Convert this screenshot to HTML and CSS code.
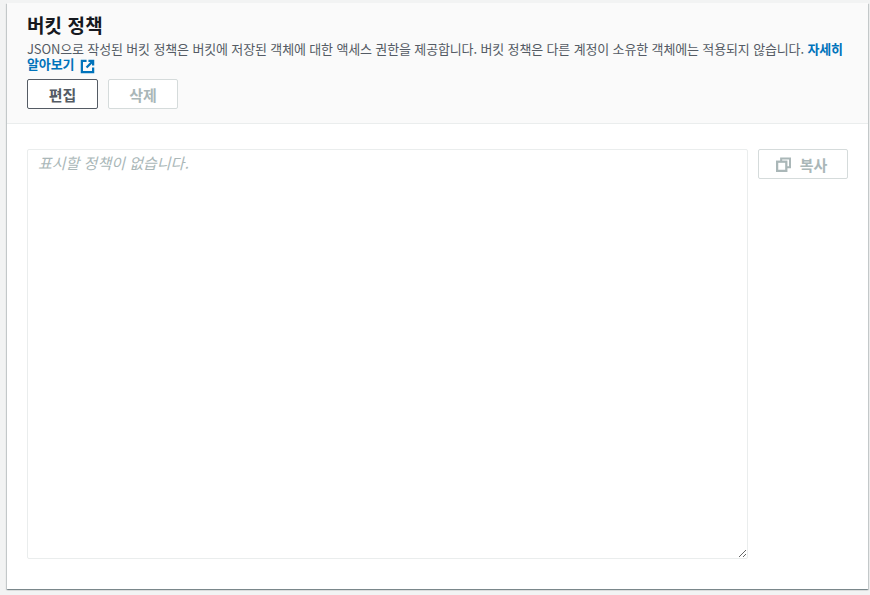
FILE: index.html
```html
<!DOCTYPE html>
<html lang="ko">
<head>
<meta charset="utf-8">
<title>버킷 정책</title>
<link rel="stylesheet" href="styles.css">
</head>
<body>
<section class="card">
  <header class="card-header">
    <h2 class="title">버킷 정책</h2>
    <p class="desc">JSON으로 작성된 버킷 정책은 버킷에 저장된 객체에 대한 액세스 권한을 제공합니다. 버킷 정책은 다른 계정이 소유한 객체에는 적용되지 않습니다. <a class="link" href="#">자세히 알아보기<svg class="ext" viewBox="0 0 16 16" width="16" height="16" aria-hidden="true"><path d="M7 2H2v12h12V9" fill="none" stroke="currentColor" stroke-width="2.4"/><path d="M9 2h5v5" fill="none" stroke="currentColor" stroke-width="2.4"/><path d="M14 2L7 9" fill="none" stroke="currentColor" stroke-width="2.4"/></svg></a></p>
    <div class="actions">
      <button class="btn btn-edit" type="button">편집</button>
      <button class="btn btn-off" type="button" disabled>삭제</button>
    </div>
  </header>
  <div class="card-body">
    <textarea class="policy" placeholder="표시할 정책이 없습니다." readonly></textarea>
    <button class="btn btn-off btn-copy" type="button" disabled><svg class="copy" viewBox="0 0 16 16" width="16" height="16" aria-hidden="true"><path d="M5.5 5V1.5h9.5V11H11" fill="none" stroke="currentColor" stroke-width="2.2"/><rect x="1.2" y="5" width="9.8" height="9.8" fill="none" stroke="currentColor" stroke-width="2.4"/></svg>복사</button>
  </div>
</section>
</body>
</html>
```
FILE: styles.css
```css
* { box-sizing: border-box; }
html, body { height: 100%; }
body {
  margin: 0;
  padding: 3px 2px 6px 7px;
  background: #f2f3f3;
  font-family: "Noto Sans CJK KR", "Noto Sans", sans-serif;
  color: #16191f;
}
.card {
  height: 586px;
  background: #fff;
  box-shadow: 0 1px 1px 0 rgba(0,28,36,.3), 1px 1px 1px 0 rgba(0,28,36,.15), -1px 1px 1px 0 rgba(0,28,36,.15);
  display: flex;
  flex-direction: column;
}
.card-header {
  height: 121px;
  padding: 10px 20px 0;
  background: #fafafa;
  border-bottom: 1px solid #eaeded;
}
.title {
  margin: 0;
  font-size: 19px;
  line-height: 24px;
  font-weight: 700;
  letter-spacing: .1px;
}
.desc {
  height: 31px;
  margin: 4px 0 0;
  font-size: 13px;
  line-height: 15px;
  letter-spacing: -.14px;
  color: #545b64;
}
.link { color: #0073bb; font-weight: 700; text-decoration: none; }
.ext { width: 15px; height: 15px; margin-left: 6px; vertical-align: -5px; }
.actions { display: flex; gap: 10px; margin-top: 7px; }
.btn {
  height: 30px;
  font-family: inherit;
  font-size: 15px;
  font-weight: 700;
  border-radius: 2px;
  background: #fff;
  padding: 0;
}
.btn-edit { width: 71px; border: 1px solid #545b64; color: #545b64; }
.btn-off { width: 70px; border: 1px solid #d5dbdb; color: #aab7b8; }
.card-body {
  flex: 1;
  display: flex;
  align-items: flex-start;
  gap: 10px;
  padding: 25px 20px 0;
}
.policy {
  width: 721px;
  height: 410px;
  padding: 3px 10px;
  border: 1px solid #eaeded;
  border-radius: 2px;
  background: #fff;
  font-family: inherit;
  font-size: 15px;
  line-height: 20px;
  resize: both;
  outline: none;
}
.policy::placeholder { color: #aab7b8; font-style: italic; opacity: 1; }
.btn-copy {
  width: 90px;
  display: flex;
  align-items: center;
  justify-content: center;
  gap: 9px;
  padding-right: 3px;
}
.copy { width: 15px; height: 15px; }
```
